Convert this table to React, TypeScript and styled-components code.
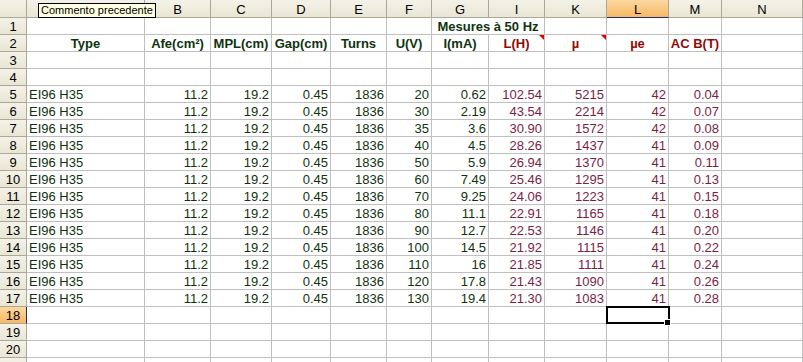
import styled, { createGlobalStyle } from 'styled-components';

const GlobalStyle = createGlobalStyle`
	html, body {
		margin: 0;
		padding: 0;
		background: #fff;
		overflow: hidden;
	}
	body {
		font-family: "Liberation Sans", Arial, sans-serif;
	}
`

const colWidths = [118, 66, 61, 59, 56, 45, 57, 56, 62, 62, 53, 81];
const colLetters = ['A', 'B', 'C', 'D', 'E', 'F', 'G', 'I', 'K', 'L', 'M', 'N'];
const selectedCol = 'L';
const selectedRow = 18;

const headers = ['Type', 'Afe(cm²)', 'MPL(cm)', 'Gap(cm)', 'Turns', 'U(V)', 'I(mA)', 'L(H)', 'µ', 'µe', 'AC B(T)', ''];

const volts = [20, 30, 35, 40, 50, 60, 70, 80, 90, 100, 110, 120, 130];
const amps = ['0.62', '2.19', '3.6', '4.5', '5.9', '7.49', '9.25', '11.1', '12.7', '14.5', '16', '17.8', '19.4'];
const henry = ['102.54', '43.54', '30.90', '28.26', '26.94', '25.46', '24.06', '22.91', '22.53', '21.92', '21.85', '21.43', '21.30'];
const mu = ['5215', '2214', '1572', '1437', '1370', '1295', '1223', '1165', '1146', '1115', '1111', '1090', '1083'];
const mue = ['42', '42', '42', '41', '41', '41', '41', '41', '41', '41', '41', '41', '41'];
const field = ['0.04', '0.07', '0.08', '0.09', '0.11', '0.13', '0.15', '0.18', '0.20', '0.22', '0.24', '0.26', '0.28'];

type Tone = 'green' | 'red' | 'plum';

const toneColor: Record<Tone, string> = {
	green: '#0f330f',
	red: '#8f0a0a',
	plum: '#7c1d45',
};

const App = () => {
	const dataRows = volts.map((v, i) => [
		'EI96 H35', '11.2', '19.2', '0.45', '1836', String(v), amps[i],
		henry[i], mu[i], mue[i], field[i], '',
	]);

	const renderRow = (n: number) => {
		const cells = [];
		const isSelRow = n === selectedRow;
		cells.push(<RowHeader key={`h${n}`} $active={isSelRow}>{n}</RowHeader>);

		if (n === 1) {
			colLetters.forEach((l, c) => {
				if (l === 'I') return;
				if (l === 'G') {
					cells.push(
						<Cell key={`1${l}`} $span={2} $align='center' $tone='green' $bold>
							Mesures à 50 Hz
						</Cell>
					);
				} else {
					cells.push(<Cell key={`1${l}-${c}`} />);
				}
			});
			return cells;
		}

		colLetters.forEach((l, c) => {
			let text = '';
			let align: 'left' | 'right' | 'center' = 'right';
			let tone: Tone = c >= 7 ? 'plum' : 'green';
			let bold = false;
			let note = false;
			if (n === 2) {
				text = headers[c];
				align = 'center';
				bold = true;
				tone = c >= 7 ? 'red' : 'green';
				note = l === 'I' || l === 'K';
			} else if (n >= 5 && n <= 17) {
				text = dataRows[n - 5][c];
				align = c === 0 ? 'left' : 'right';
			}
			cells.push(
				<Cell
					key={`${n}${l}`}
					$align={align}
					$tone={tone}
					$bold={bold}
					$selected={isSelRow && l === selectedCol}
				>
					{text}
					{note && <CommentMark />}
					{isSelRow && l === selectedCol && <FillHandle />}
				</Cell>
			);
		});
		return cells;
	};

	return (
		<>
			<GlobalStyle />
			<Sheet>
				<Grid>
					<Corner />
					{colLetters.map((l) => (
						<ColHeader key={l} $active={l === selectedCol}>{l === 'A' ? '' : l}</ColHeader>
					))}
					{Array.from({ length: 21 }, (_, i) => renderRow(i + 1))}
				</Grid>
				<Tooltip>Commento precedente</Tooltip>
			</Sheet>
		</>
	)
}

export default App;

const Sheet = styled.div`
	position: relative;
	width: 803px;
	height: 362px;
	overflow: hidden;
	background: #fff;
`

const Grid = styled.div`
	display: grid;
	grid-template-columns: 27px ${colWidths.map((w) => `${w}px`).join(' ')};
	grid-template-rows: 18px repeat(21, 17px);
	font-size: 13px;
`

const headerBase = `
	box-sizing: border-box;
	background: linear-gradient(#f4f2e8, #e9e6d4);
	border-right: 1px solid #aca899;
	border-bottom: 1px solid #aca899;
	color: #000;
	display: flex;
	align-items: center;
	justify-content: center;
	font-size: 13px;
	line-height: 1;
	overflow: hidden;
`

const Corner = styled.div`
	${headerBase}
`

const ColHeader = styled.div<{ $active?: boolean }>`
	${headerBase}
	padding-top: 1px;
	${({ $active }) => $active && `
		background: linear-gradient(#fbd8a0, #f7b865);
		border-bottom: 1px solid #1f2a6b;
	`}
`

const RowHeader = styled.div<{ $active?: boolean }>`
	${headerBase}
	${({ $active }) => $active && `
		background: linear-gradient(#fbd8a0, #f7b865);
		border-right: 1px solid #1f2a6b;
	`}
`

const Cell = styled.div<{
	$align?: 'left' | 'right' | 'center',
	$tone?: Tone,
	$bold?: boolean,
	$span?: number,
	$selected?: boolean,
}>`
	position: relative;
	box-sizing: border-box;
	border-right: 1px solid #c0c0c0;
	border-bottom: 1px solid #c0c0c0;
	padding: 0 2px;
	display: flex;
	align-items: center;
	justify-content: ${({ $align }) => $align === 'left' ? 'flex-start' : $align === 'center' ? 'center' : 'flex-end'};
	color: ${({ $tone }) => toneColor[$tone || 'green']};
	font-weight: ${({ $bold }) => $bold ? 700 : 400};
	white-space: nowrap;
	line-height: 16px;
	padding-top: 1px;
	${({ $span }) => $span && `grid-column: span ${$span};`}
	${({ $selected }) => $selected && `
		&::after {
			content: '';
			position: absolute;
			top: -1px;
			left: -1px;
			right: -2px;
			bottom: -1px;
			border: 2px solid #000;
		}
	`}
`

const CommentMark = styled.span`
	position: absolute;
	top: 0;
	right: 0;
	width: 0;
	height: 0;
	border-top: 5px solid #e00000;
	border-left: 5px solid transparent;
`

const FillHandle = styled.span`
	position: absolute;
	right: -3px;
	bottom: -3px;
	width: 5px;
	height: 5px;
	background: #000;
	border: 1px solid #fff;
	z-index: 2;
`

const Tooltip = styled.div`
	position: absolute;
	left: 38px;
	top: 3px;
	height: 15px;
	box-sizing: border-box;
	padding: 0 2px;
	background: #ffffe1;
	border: 1px solid #000;
	font-family: "Liberation Sans", Arial, sans-serif;
	font-size: 11px;
	line-height: 13px;
	color: #000;
	white-space: nowrap;
`
